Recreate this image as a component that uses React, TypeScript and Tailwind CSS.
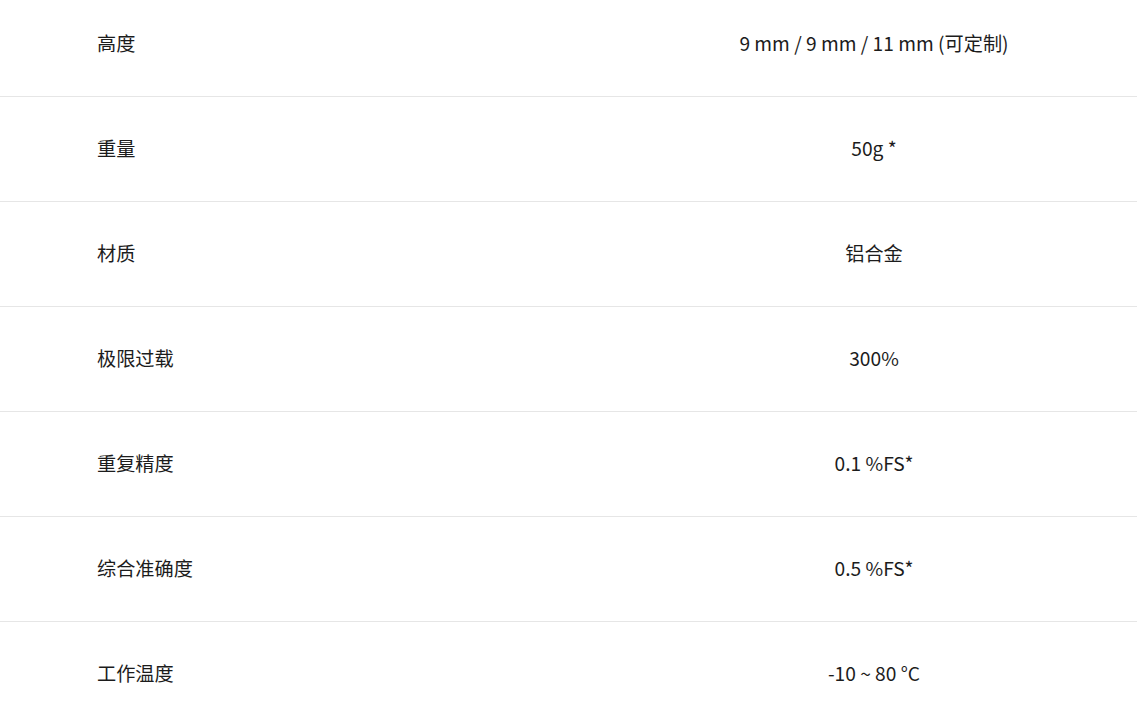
const specs: { label: string; value: string }[] = [
  { label: "高度", value: "9 mm / 9 mm / 11 mm (可定制)" },
  { label: "重量", value: "50g *" },
  { label: "材质", value: "铝合金" },
  { label: "极限过载", value: "300%" },
  { label: "重复精度", value: "0.1 %FS*" },
  { label: "综合准确度", value: "0.5 %FS*" },
  { label: "工作温度", value: "-10 ~ 80 °C" },
];

export default function App() {
  return (
    <main className="h-[724px] overflow-hidden bg-white text-[#1c1c1c] [font-family:'Noto_Sans_CJK_SC',sans-serif]">
      <div className="-mt-[8px]">
        {specs.map((row, i) => (
          <div
            key={row.label}
            className={
              "grid h-[105px] grid-cols-[611px_1fr] items-center pb-[2px] text-[19.2px] " +
              (i < specs.length - 1 ? "border-b border-[#e6e6e6]" : "")
            }
          >
            <div className="pl-[97px]">{row.label}</div>
            <div className="text-center">{row.value}</div>
          </div>
        ))}
      </div>
    </main>
  );
}
